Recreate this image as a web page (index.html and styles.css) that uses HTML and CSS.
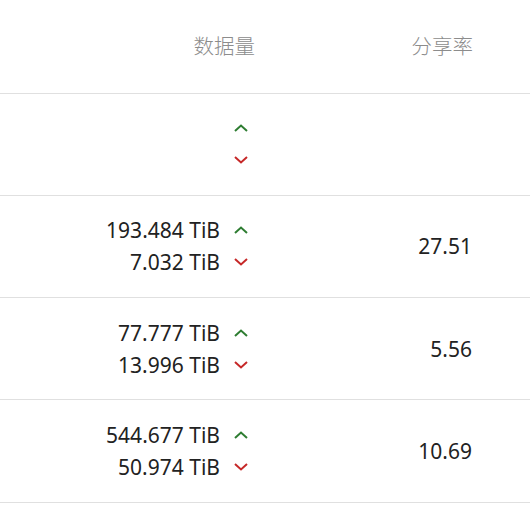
FILE: index.html
```html
<!DOCTYPE html>
<html lang="zh">
<head>
  <meta charset="UTF-8" />
  <title>数据量</title>
  <link rel="stylesheet" href="styles.css">
</head>
<body>
  <table class="stats">
    <thead>
      <tr>
        <th class="col-pad"></th>
        <th class="col-data">数据量</th>
        <th class="col-ratio">分享率</th>
      </tr>
    </thead>
    <tbody>
      <tr>
        <td class="col-pad"></td>
        <td class="col-data">
          <div class="line"><span class="amount"></span><svg class="arrow up" viewBox="0 0 14 8"><path d="M1 7 L7 1.5 L13 7"/></svg></div>
          <div class="line"><span class="amount"></span><svg class="arrow down" viewBox="0 0 14 8"><path d="M1 1 L7 6.5 L13 1"/></svg></div>
        </td>
        <td class="col-ratio"></td>
      </tr>
      <tr>
        <td class="col-pad"></td>
        <td class="col-data">
          <div class="line"><span class="amount">193.484 TiB</span><svg class="arrow up" viewBox="0 0 14 8"><path d="M1 7 L7 1.5 L13 7"/></svg></div>
          <div class="line"><span class="amount">7.032 TiB</span><svg class="arrow down" viewBox="0 0 14 8"><path d="M1 1 L7 6.5 L13 1"/></svg></div>
        </td>
        <td class="col-ratio">27.51</td>
      </tr>
      <tr>
        <td class="col-pad"></td>
        <td class="col-data">
          <div class="line"><span class="amount">77.777 TiB</span><svg class="arrow up" viewBox="0 0 14 8"><path d="M1 7 L7 1.5 L13 7"/></svg></div>
          <div class="line"><span class="amount">13.996 TiB</span><svg class="arrow down" viewBox="0 0 14 8"><path d="M1 1 L7 6.5 L13 1"/></svg></div>
        </td>
        <td class="col-ratio">5.56</td>
      </tr>
      <tr>
        <td class="col-pad"></td>
        <td class="col-data">
          <div class="line"><span class="amount">544.677 TiB</span><svg class="arrow up" viewBox="0 0 14 8"><path d="M1 7 L7 1.5 L13 7"/></svg></div>
          <div class="line"><span class="amount">50.974 TiB</span><svg class="arrow down" viewBox="0 0 14 8"><path d="M1 1 L7 6.5 L13 1"/></svg></div>
        </td>
        <td class="col-ratio">10.69</td>
      </tr>
    </tbody>
  </table>
</body>
</html>
```

FILE: styles.css
```css
* {
  margin: 0;
  padding: 0;
  box-sizing: border-box;
}

body {
  background: #fff;
  font-family: "Noto Sans", "Noto Sans CJK SC", sans-serif;
  color: #222;
}

.stats {
  width: 530px;
  border-collapse: collapse;
  table-layout: fixed;
}

.stats th {
  height: 93px;
  padding-bottom: 2px;
  font-size: 20.5px;
  font-weight: 300;
  color: #8c8c8c;
  font-family: "Noto Sans CJK SC", sans-serif;
  text-align: right;
  border-bottom: 1px solid #e0e0e0;
}

.stats td {
  height: 102.3px;
  font-size: 21px;
  text-align: right;
  border-bottom: 1px solid #e0e0e0;
}

.col-pad {
  width: 100px;
}

.col-data {
  width: 172px;
}

th.col-data {
  padding-right: 17px;
}

td.col-data {
  padding-right: 24px;
}

.col-ratio {
  width: 258px;
}

th.col-ratio {
  padding-right: 57px;
}

td.col-ratio {
  padding-right: 58px;
}

.line {
  display: flex;
  justify-content: flex-end;
  align-items: center;
  height: 32px;
}

.arrow {
  width: 14px;
  height: 8px;
  margin-left: 14px;
  fill: none;
  stroke-width: 2;
}

.arrow.up {
  stroke: #2e7d32;
}

.arrow.down {
  stroke: #c62828;
}
```
